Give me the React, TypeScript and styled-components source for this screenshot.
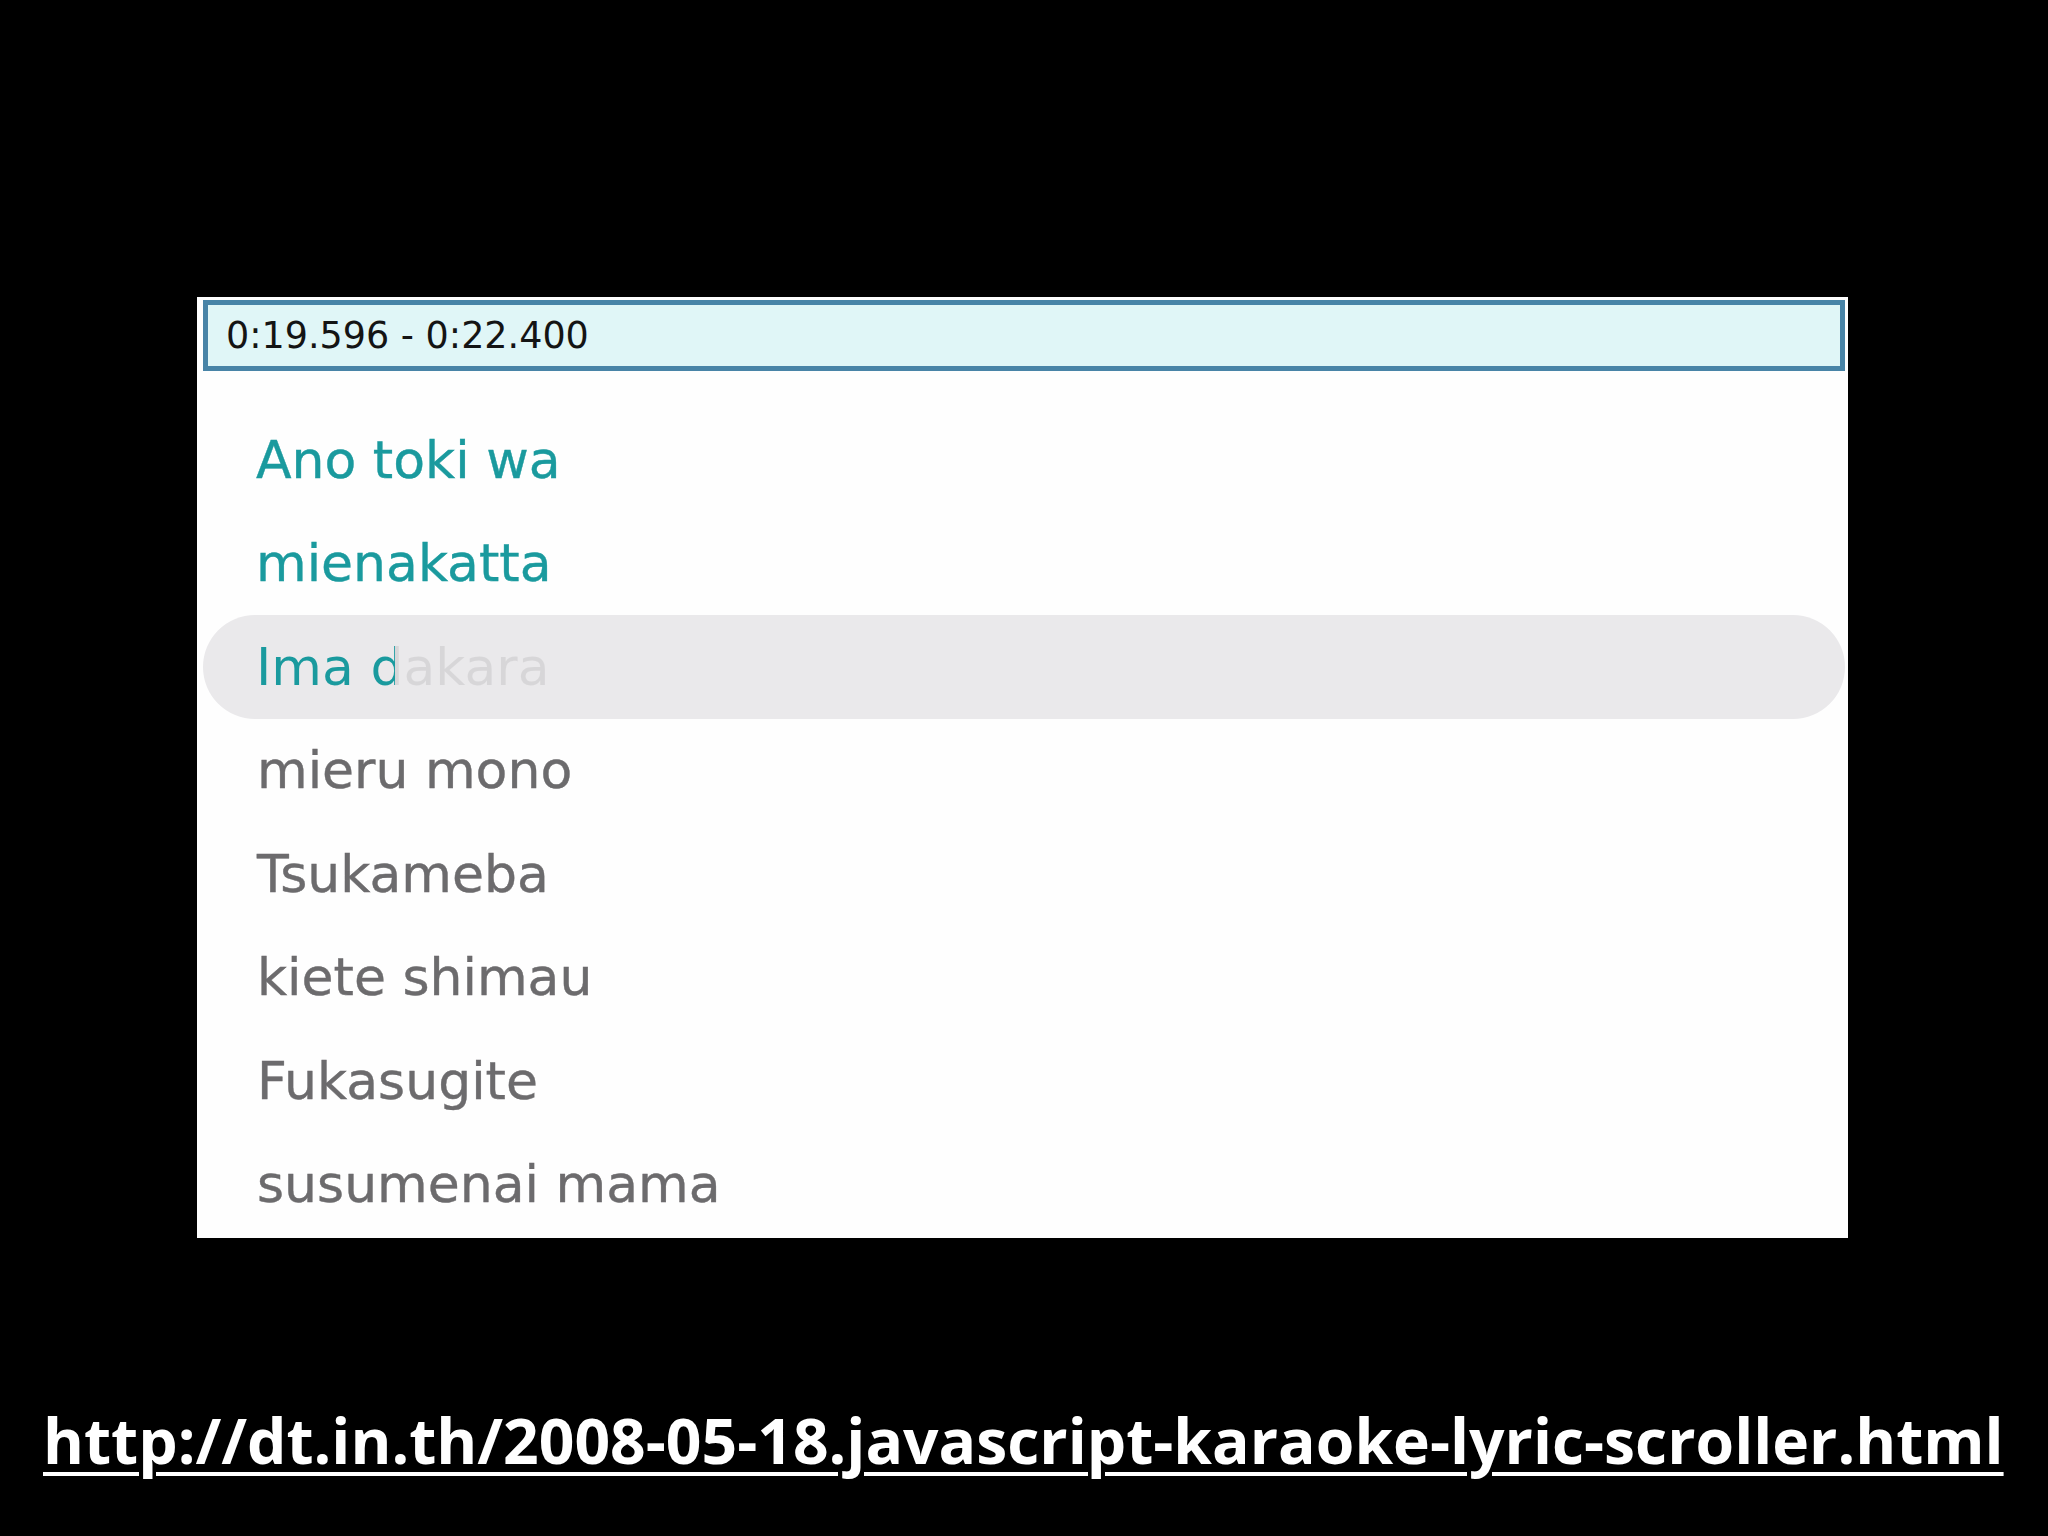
import React from "react";
import styled, { createGlobalStyle } from "styled-components";

const GlobalStyle = createGlobalStyle`
  html, body {
    margin: 0;
    padding: 0;
    background: #000;
  }
  #root {
    width: 2048px;
    height: 1536px;
  }
`;

type LyricLine = { text: string; state: "sung" | "current" | "pending" };

const lyrics: LyricLine[] = [
  { text: "Ano toki wa", state: "sung" },
  { text: "mienakatta", state: "sung" },
  { text: "Ima dakara", state: "current" },
  { text: "mieru mono", state: "pending" },
  { text: "Tsukameba", state: "pending" },
  { text: "kiete shimau", state: "pending" },
  { text: "Fukasugite", state: "pending" },
  { text: "susumenai mama", state: "pending" },
];

// how far the wipe has gone through the current line, in px
const wipe = 139;

const App: React.FunctionComponent = () => {
  return (
    <Slide>
      <GlobalStyle />
      <Player>
        <TimeBar>0:19.596 - 0:22.400</TimeBar>
        <LyricList>
          {lyrics.map((line) =>
            line.state === "current" ? (
              <Row key={line.text} $active>
                <Wipe
                  style={{
                    backgroundImage: `linear-gradient(to right, #1a9a9e ${wipe}px, #d7d6d8 ${wipe}px)`,
                  }}
                >
                  {line.text}
                </Wipe>
              </Row>
            ) : (
              <Row key={line.text} $pending={line.state === "pending"}>
                {line.text}
              </Row>
            )
          )}
        </LyricList>
      </Player>
      <Link href="#">
        http://dt.in.th/2008-05-18.javascript-karaoke-lyric-scroller.html
      </Link>
    </Slide>
  );
};
export default App;

const Slide = styled.main`
  display: flex;
  flex-direction: column;
  width: 2048px;
  height: 1536px;
  background: #000;
  overflow: hidden;
`;
const Player = styled.section`
  display: flex;
  flex-direction: column;
  width: 1651px;
  height: 941px;
  margin: 297px 0 0 197px;
  padding: 3px 3px 0 6px;
  box-sizing: border-box;
  background: #fefefe;
  font-family: "DejaVu Sans", Verdana, sans-serif;
`;
const TimeBar = styled.div`
  display: flex;
  align-items: center;
  height: 71px;
  box-sizing: border-box;
  padding-left: 18px;
  border: 5px solid #4884a7;
  background: #e0f6f7;
  color: #141414;
  font-size: 36.5px;
`;
const LyricList = styled.ol`
  display: flex;
  flex-direction: column;
  list-style: none;
  margin: 0;
  padding: 37px 0 0 0;
`;
const Row = styled.li<{ $active?: boolean; $pending?: boolean }>`
  display: flex;
  align-items: center;
  height: 103.5px;
  padding-left: ${(p) => (p.$pending ? "54px" : "53px")};
  border-radius: 52px;
  background: ${(p) => (p.$active ? "#eae9eb" : "transparent")};
  color: ${(p) => (p.$pending ? "#6c6b6d" : "#1a9a9e")};
  font-size: 52px;
  line-height: 1;
  white-space: nowrap;
  -webkit-text-stroke: 0.4px currentColor;
`;
const Wipe = styled.span`
  display: inline-block;
  color: transparent;
  -webkit-text-stroke: 0;
  -webkit-background-clip: text;
  background-clip: text;
`;
const Link = styled.a`
  display: block;
  margin: 171px 0 0 43px;
  color: #fff;
  font-family: "Open Sans", "DejaVu Sans", sans-serif;
  font-weight: 700;
  font-size: 62.4px;
  line-height: 1;
  white-space: nowrap;
  text-decoration: underline;
  text-decoration-thickness: 4px;
  text-underline-offset: 8px;
`;
